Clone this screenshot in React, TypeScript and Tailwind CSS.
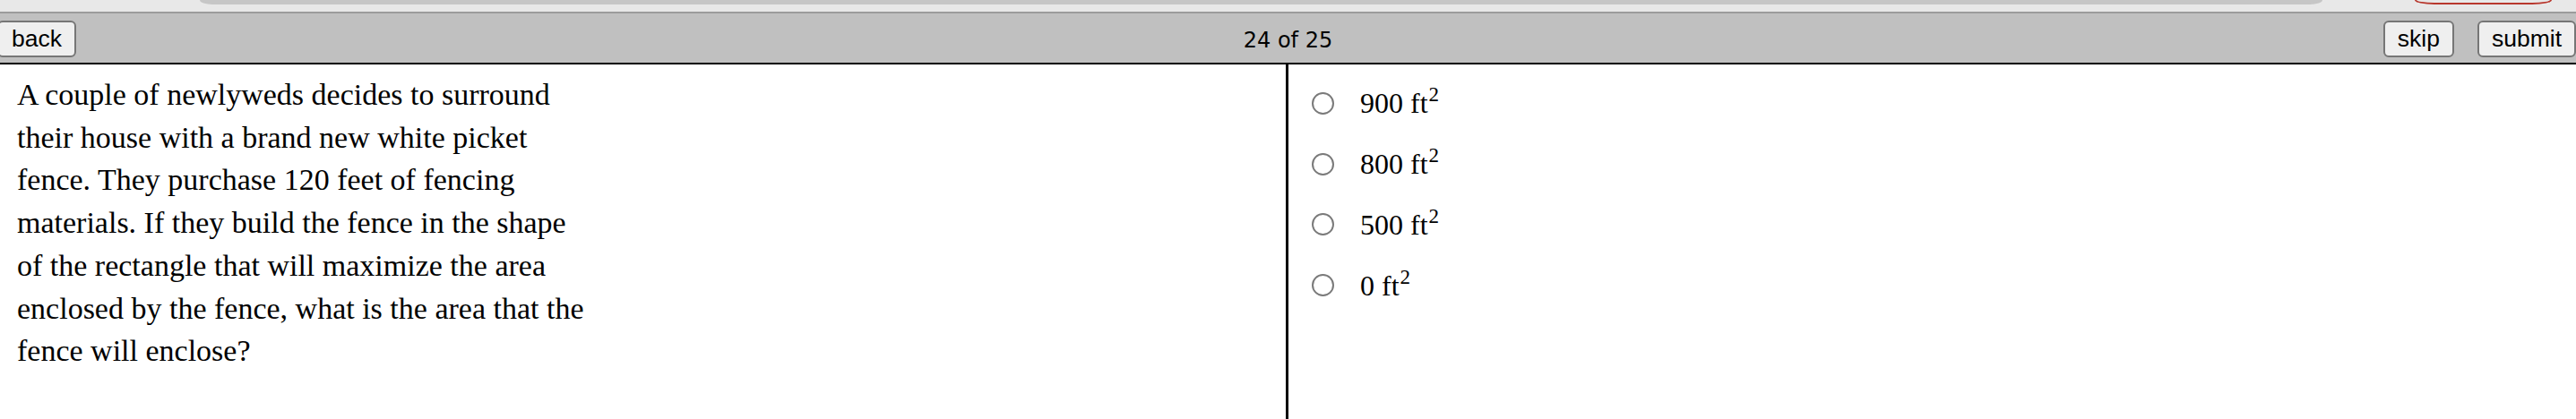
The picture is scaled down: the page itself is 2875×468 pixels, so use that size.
import React from "react";

const options = ["900", "800", "500", "0"];

function Btn({ children, className = "" }: { children: React.ReactNode; className?: string }) {
  return (
    <button
      className={
        "h-[41px] box-border border-2 border-[#767676] rounded-[6px] bg-[#efefef] px-[14px] text-[26.5px] leading-none text-black font-['Liberation_Sans',Arial,sans-serif] flex items-center " +
        className
      }
    >
      {children}
    </button>
  );
}

export default function App() {
  return (
    <div className="w-[2875px] h-[468px] overflow-hidden bg-white flex flex-col">
      {/* top browser strip fragment */}
      <div className="h-[13px] bg-[#e8e8e8] flex items-start shrink-0">
        <div className="ml-[223px] w-[2369px] h-[5px] bg-[#c6c6c6] rounded-b-[14px_5px]" />
        <div className="ml-[103px] w-[153px] h-[5px] border-2 border-t-0 border-[#b8372d] rounded-b-[22px_5px]" />
      </div>
      <div className="h-[2px] bg-[#9b9b9b] shrink-0" />

      {/* toolbar */}
      <div className="h-[55px] bg-[#c0c0c0] flex items-start pt-[8px] shrink-0">
        <div className="flex-1 flex">
          <Btn className="-ml-[3px]">back</Btn>
        </div>
        <div className="mt-[8px] text-[24px] leading-[28px] text-black font-['DejaVu_Sans',Verdana,sans-serif]">
          24 of 25
        </div>
        <div className="flex-1 flex justify-end gap-[26px]">
          <Btn>skip</Btn>
          <Btn>submit</Btn>
        </div>
      </div>
      <div className="h-[2px] bg-black shrink-0" />

      {/* content */}
      <div className="flex flex-1 min-h-0">
        <div className="w-[1438px] shrink-0 border-r-[3px] border-black pl-[19px] pt-[10px]">
          <p className="w-[640px] text-[34px] leading-[47.7px] text-black font-['Liberation_Serif','Times_New_Roman',serif]">
            A couple of newlyweds decides to surround their house with a brand new white picket fence. They
            purchase 120 feet of fencing materials. If they build the fence in the shape of the rectangle that
            will maximize the area enclosed by the fence, what is the area that the fence will enclose?
          </p>
        </div>
        <div className="flex-1 pt-[9.6px] pl-[26px] flex flex-col">
          {options.map((v) => (
            <label key={v} className="h-[67.7px] flex items-center gap-[29px]">
              <input
                type="radio"
                name="answer"
                className="appearance-none m-0 w-[25px] h-[25px] rounded-full border-2 border-[#7a7a7a] bg-white shrink-0"
              />
              <span className="text-[32px] text-black font-['Liberation_Serif','Times_New_Roman',serif]">
                {v} ft<sup className="text-[23px] -top-[13px] ml-[1px]">2</sup>
              </span>
            </label>
          ))}
        </div>
      </div>
    </div>
  );
}
